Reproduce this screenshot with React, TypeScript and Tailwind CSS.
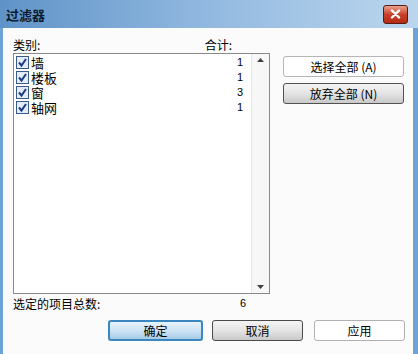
import React from "react";

const font = { fontFamily: '"Noto Sans CJK SC", "Liberation Sans", sans-serif' };

function Check() {
  return (
    <span className="w-[13px] h-[13px] border border-[#3a5a8a] bg-[#e4ecf7] flex items-center justify-center shrink-0">
      <svg width="11" height="11" viewBox="0 0 11 11">
        <path d="M2 5.5 L4.5 8.5 L9 2" fill="none" stroke="#1b3b8a" strokeWidth="2" />
      </svg>
    </span>
  );
}

const rows = [
  { name: "墙", n: 1 },
  { name: "楼板", n: 1 },
  { name: "窗", n: 3 },
  { name: "轴网", n: 1 },
];

export default function App() {
  return (
    <div className="w-[418px] h-[354px] flex flex-col bg-[#6fa2d6] overflow-hidden text-[12px] text-black" style={font}>
      {/* Title bar */}
      <div className="h-[28px] flex items-center justify-between pl-[6px] pr-[10px] bg-gradient-to-r from-[#5f93c8] via-[#92b9e0] to-[#bcd6ee]">
        <span className="text-[13px] font-bold text-[#0c1b2e] leading-none">过滤器</span>
        <div className="w-[25px] h-[19px] rounded-[3px] border border-[#5a1a12] bg-gradient-to-b from-[#e8a08f] via-[#c9402a] to-[#b52a14] flex items-center justify-center">
          <svg width="11" height="10" viewBox="0 0 11 10">
            <path d="M2 1.5 L9 8.5 M9 1.5 L2 8.5" stroke="#ffffff" strokeWidth="2.4" strokeLinecap="round" />
          </svg>
        </div>
      </div>
      {/* Body */}
      <div className="flex-1 ml-[3px] mr-[5px] bg-[#fbfbfb] flex flex-col pl-[10px] pt-[9px]">
        <div className="flex">
          <div className="flex flex-col w-[257px]">
            <div className="h-[16px] flex items-center justify-between pr-[38px] leading-none">
              <span>类别:</span>
              <span>合计:</span>
            </div>
            <div className="h-[241px] border border-[#8a8a8a] bg-white flex">
              <div className="flex-1 flex flex-col pt-[1px] pl-[2px] pr-[8px]">
                {rows.map((r) => (
                  <div key={r.name} className="h-[15px] flex items-center">
                    <Check />
                    <span className="ml-[2px] text-[13px] leading-none flex-1">{r.name}</span>
                    <span className="leading-none" style={{ fontFamily: '"Liberation Sans", sans-serif', fontSize: 11 }}>{r.n}</span>
                  </div>
                ))}
              </div>
              <div className="w-[18px] border-l border-[#e6e6e6] bg-[#f7f7f7] flex flex-col items-center justify-between py-[4px]">
                <svg width="7" height="4" viewBox="0 0 7 4"><path d="M0 4 L3.5 0 L7 4 Z" fill="#404040" /></svg>
                <svg width="7" height="4" viewBox="0 0 7 4"><path d="M0 0 L3.5 4 L7 0 Z" fill="#404040" /></svg>
              </div>
            </div>
          </div>
          <div className="ml-[13px] mt-[19px] flex flex-col gap-[6px]">
            <div className="w-[121px] h-[21px] rounded-[3px] border border-[#b5b5b5] bg-white flex items-center justify-center leading-none">
              选择全部 (A)
            </div>
            <div className="w-[121px] h-[21px] rounded-[3px] border border-[#505050] bg-gradient-to-b from-[#f4f4f4] via-[#e4e4e4] to-[#c9c9c9] flex items-center justify-center leading-none">
              放弃全部 (N)
            </div>
          </div>
        </div>
        <div className="h-[17px] mt-[1px] flex items-center w-[233px] justify-between leading-none">
          <span>选定的项目总数:</span>
          <span style={{ fontFamily: '"Liberation Sans", sans-serif', fontSize: 11 }}>6</span>
        </div>
        <div className="flex mt-[8px] pl-[95px] gap-[9px]">
          <div className="w-[95px] h-[21px] rounded-[3px] border-2 border-[#3a86bf] bg-gradient-to-b from-[#e6f2fb] via-[#cde4f5] to-[#a8cbe6] flex items-center justify-center leading-none">
            确定
          </div>
          <div className="w-[91px] h-[21px] rounded-[3px] border border-[#4a4a4a] bg-gradient-to-b from-[#f4f4f4] via-[#e4e4e4] to-[#c9c9c9] flex items-center justify-center leading-none">
            取消
          </div>
          <div className="ml-[2px] w-[91px] h-[21px] rounded-[3px] border border-[#b0b0b0] bg-white flex items-center justify-center leading-none">
            应用
          </div>
        </div>
      </div>
    </div>
  );
}
